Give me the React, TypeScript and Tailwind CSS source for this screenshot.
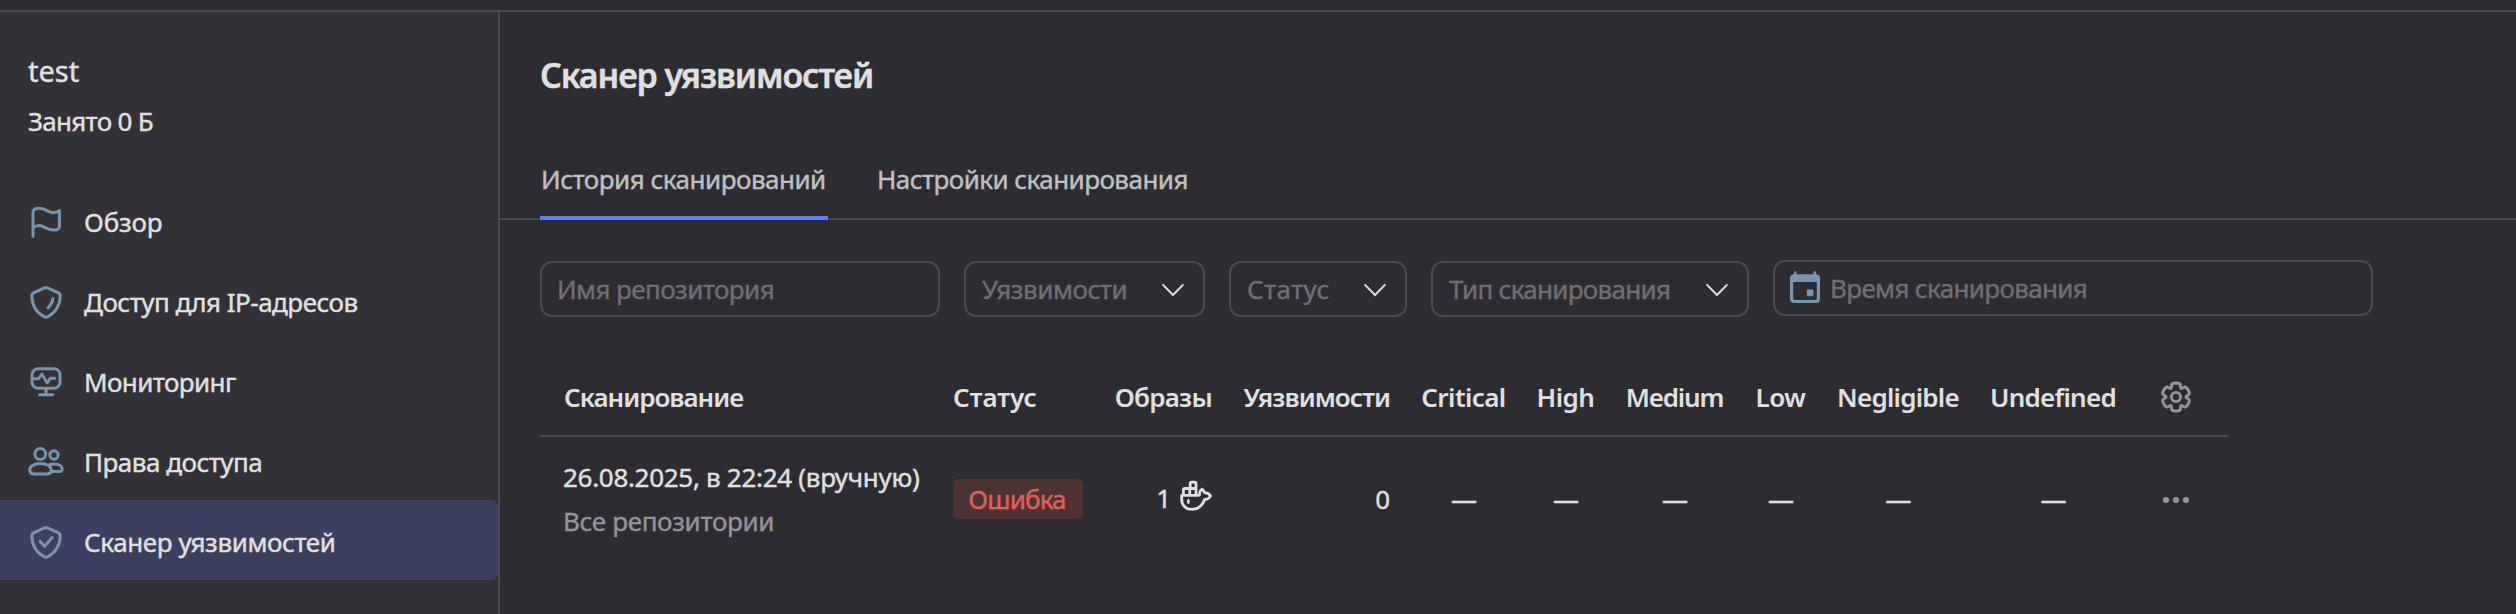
import type { ReactNode } from "react";

const Svg = ({ size = 40, children }: { size?: number; children: ReactNode }) => (
  <svg
    width={size}
    height={size}
    viewBox={`0 0 ${size} ${size}`}
    fill="none"
    stroke="currentColor"
    strokeWidth={3}
    strokeLinecap="round"
    strokeLinejoin="round"
    className="shrink-0"
  >
    {children}
  </svg>
);

const shield =
  "M18.6 7.9Q20 7.2 21.4 7.9L32 12.7Q34.3 13.8 34.2 16.2C33.9 25.5 30 32.2 21.8 36.7Q20 37.6 18.2 36.7C10 32.2 6.1 25.5 5.8 16.2Q5.7 13.8 8 12.7Z";

const FlagIcon = () => (
  <Svg>
    <path d="M7 36.4V12.4Q7 9.8 9.5 8.8C18 6.2 21.5 12.7 27.5 12.7Q30.8 12.6 33.4 10.6V26.5Q33.4 28.6 31.4 29.5C23 32.5 19 25.6 12.8 25.6Q9.6 25.7 7 27.6" />
  </Svg>
);

const ShieldIcon = () => (
  <Svg>
    <path d={shield} />
    <path d="M27 18.4Q26.1 24 22 27.8" />
  </Svg>
);

const MonitorIcon = () => (
  <Svg>
    <rect x="6" y="8.8" width="28" height="19.4" rx="6" />
    <path d="M20 28.2V34.6M13.4 34.7H26.6" />
    <path d="M7 18.8H12.4L16 14.2L21.2 23L24.3 18.2H28.6" />
  </Svg>
);

const UsersIcon = () => (
  <Svg>
    <circle cx="14.3" cy="14" r="5.4" />
    <circle cx="28" cy="15" r="4.2" />
    <path d="M3.7 30C3.9 26 8.6 23.5 14.5 23.5S25.1 26 25.3 30Q25.3 33.9 21.5 33.9H7.5Q3.7 33.9 3.7 30Z" />
    <path d="M23 24.8Q25.3 23.9 28 23.9C32.6 23.9 36.2 26 36.2 29Q36.2 31.5 33.6 31.5H25.6" />
  </Svg>
);

const ShieldCheckIcon = () => (
  <Svg>
    <path d={shield} />
    <path d="M14 21.4L18.6 26.3L26.2 17.6" />
  </Svg>
);

const ChevronIcon = () => (
  <svg width="24" height="16" viewBox="0 0 24 16" fill="none" stroke="currentColor" strokeWidth="2" className="shrink-0 text-[#e0e0e1]">
    <path d="M1.6 2.4L12 13L22.4 2.4" />
  </svg>
);

const CalendarIcon = () => (
  <svg width="30" height="32" viewBox="0 0 30 32" fill="currentColor" className="shrink-0 text-[#7a93ae]">
    <path
      fillRule="evenodd"
      d="M4 3.2V1.2Q4 .3 5.2 .3T6.5 1.2V3.2H23.5V1.2Q23.5 .3 24.8 .3T26 1.2V3.2Q30 3.4 30 7V28Q30 32 26 32H4Q0 32 0 28V7Q0 3.4 4 3.2ZM3.2 11V27.4Q3.2 29 4.8 29H25.2Q26.8 29 26.8 27.4V11Z"
    />
    <rect x="16.8" y="18.5" width="6.6" height="6.8" rx="1.2" />
  </svg>
);

const gearPoints = Array.from({ length: 6 }).flatMap((_, k) =>
  [
    [9.9, -25],
    [14.8, -19],
    [14.8, 19],
    [9.9, 25],
  ].map(([r, a]) => {
    const t = ((k * 60 + a) * Math.PI) / 180;
    return [16 + r * Math.sin(t), 16 - r * Math.cos(t)];
  }),
);
const gearPath =
  gearPoints
    .map((p, i) => {
      const n = gearPoints[(i + 1) % gearPoints.length];
      const mid = `${((p[0] + n[0]) / 2).toFixed(2)} ${((p[1] + n[1]) / 2).toFixed(2)}`;
      return i === 0 ? `M${mid}` : `Q${p[0].toFixed(2)} ${p[1].toFixed(2)} ${mid}`;
    })
    .join("") +
  `Q${gearPoints[0][0].toFixed(2)} ${gearPoints[0][1].toFixed(2)} ${((gearPoints[0][0] + gearPoints[1][0]) / 2).toFixed(2)} ${((gearPoints[0][1] + gearPoints[1][1]) / 2).toFixed(2)}Z`;

const GearIcon = () => (
  <Svg size={32}>
    <path d={gearPath} strokeWidth={2.9} />
    <circle cx="16" cy="16" r="4.6" strokeWidth={2.9} />
  </Svg>
);

const DotsIcon = () => (
  <svg width="32" height="8" viewBox="0 0 32 8" fill="currentColor">
    <circle cx="6" cy="4" r="3.1" />
    <circle cx="16" cy="4" r="3.1" />
    <circle cx="26" cy="4" r="3.1" />
  </svg>
);

const WhaleIcon = () => (
  <svg width="32" height="32" viewBox="0 0 32 32" fill="none" stroke="currentColor" strokeWidth="2.8" strokeLinejoin="round" className="shrink-0">
    <path d="M10.2 8.4V3.6Q10.2 2.2 11.6 2.2H14.6Q16 2.2 16 3.6V15M3.4 15V9.8Q3.4 8.5 4.8 8.5H16M9.8 8.5V15" />
    <path d="M1.8 15.4H18.4Q20 15.2 19.6 13.4Q19.4 10.8 22 9.2Q23.9 10.4 24.3 12.6Q28.6 12.6 30.6 16Q29 19.3 24.6 19.6C22.2 26 18 29.4 12 29.4C5.2 29.4 1.6 25 1.6 18.4Z" />
    <ellipse cx="8.4" cy="21.4" rx="1.4" ry="2.6" fill="currentColor" stroke="none" />
  </svg>
);

const nav = [
  { label: "Обзор", icon: <FlagIcon />, track: "tracking-[-0.15px]" },
  { label: "Доступ для IP-адресов", icon: <ShieldIcon />, track: "tracking-[-0.52px]" },
  { label: "Мониторинг", icon: <MonitorIcon />, track: "tracking-[-0.6px]" },
  { label: "Права доступа", icon: <UsersIcon />, track: "tracking-[-0.5px]" },
  { label: "Сканер уязвимостей", icon: <ShieldCheckIcon />, track: "tracking-[-0.4px]", active: true },
];

const Select = ({ label, className }: { label: string; className: string }) => (
  <div className={`flex h-14 items-center justify-between rounded-xl border-2 border-[#4b4a50] pr-[18px] pl-4 text-[#6f6e73] ${className}`}>
    <span>{label}</span>
    <span className="pt-0.5">
      <ChevronIcon />
    </span>
  </div>
);

const severities = [
  { label: "Critical", track: "tracking-[-0.55px]" },
  { label: "High", track: "tracking-[-0.5px]" },
  { label: "Medium", track: "tracking-[-1.2px]" },
  { label: "Low", track: "tracking-[-0.5px]" },
  { label: "Negligible", track: "tracking-[-0.75px]" },
  { label: "Undefined", track: "tracking-[-0.75px]" },
];

const columns = "grid grid-cols-[397px_162px_128px_179px_116px_88px_130px_82px_153px_157px_88px] items-center";

export default function App() {
  return (
    <div className="flex h-[614px] flex-col overflow-hidden bg-[#2d2c33] font-['Noto_Sans',sans-serif] text-[26px] leading-9 whitespace-nowrap text-[#e0e0e1] [-webkit-text-stroke:0.4px]">
      <header className="h-3 shrink-0 border-b-2 border-[#4b4a50]" />
      <div className="flex min-h-0 flex-1">
        <aside className="w-[500px] shrink-0 border-r-2 border-[#4b4a50] bg-[#323137]">
          <div className="px-7 pt-[41px] text-[29px]">test</div>
          <div className="mt-3.5 px-7 tracking-[-0.7px]">Занято 0 Б</div>
          <nav className="mt-[41px]">
            {nav.map((n) => (
              <a key={n.label} className={`flex h-20 items-center gap-[18px] pl-[26px] ${n.active ? "rounded-r-md bg-[#3c3f5e]" : ""}`}>
                <span className="text-[#7a93ae]">{n.icon}</span>
                <span className={`pt-[3px] ${n.track}`}>{n.label}</span>
              </a>
            ))}
          </nav>
        </aside>

        <main className="min-w-0 flex-1">
          <h1 className="px-10 pt-[41px] text-[34px] leading-[44px] font-semibold tracking-[-1.1px]">Сканер уязвимостей</h1>
          <div className="mt-16 flex border-b-2 border-[#4b4a50] px-10 text-[#c0c0c2]">
            <div className="-mb-0.5 w-[288px] border-b-4 border-[#5c80fb] pb-[19px] pl-px tracking-[-0.5px]">История сканирований</div>
            <div className="ml-[49px] tracking-[-0.55px]">Настройки сканирования</div>
          </div>

          <div className="flex gap-6 px-10 pt-[41px]">
            <div className="flex h-14 w-[400px] items-center rounded-xl border-2 border-[#4b4a50] pl-[15px] tracking-[-0.58px] text-[#6f6e73]">
              Имя репозитория
            </div>
            <Select label="Уязвимости" className="w-[241px] tracking-[-0.45px]" />
            <Select label="Статус" className="w-[178px] tracking-[0.4px]" />
            <Select label="Тип сканирования" className="w-[318px] tracking-[-0.7px]" />
            <div className="-mt-px flex h-14 w-[600px] items-center gap-2.5 rounded-xl border-2 border-[#4b4a50] pl-[15px] tracking-[-0.65px] text-[#6f6e73]">
              <span className="pb-0.5">
                <CalendarIcon />
              </span>
              Время сканирования
            </div>
          </div>

          <section className="mt-10 ml-10 w-[1688px]">
            <div className={`${columns} h-20 border-b-2 border-[#4b4a50] font-semibold [-webkit-text-stroke:0]`}>
              <div className="pt-0.5 pl-6 tracking-[-1px]">Сканирование</div>
              <div className="pt-0.5 pl-4">Статус</div>
              <div className="pt-0.5 pr-[15px] text-right tracking-[-0.75px]">Образы</div>
              <div className="pt-0.5 pr-4 text-right tracking-[-0.95px]">Уязвимости</div>
              {severities.map((s) => (
                <div key={s.label} className={`pt-0.5 pr-px text-center ${s.track}`}>
                  {s.label}
                </div>
              ))}
              <div className="flex justify-center pt-0.5 text-[#949398]">
                <GearIcon />
              </div>
            </div>
            <div className={`${columns} h-[122px]`}>
              <div className="flex flex-col gap-2 pt-0.5 pl-[23px]">
                <span className="tracking-[-0.3px]">26.08.2025, в 22:24 (вручную)</span>
                <span className="tracking-[-0.33px] text-[#949398]">Все репозитории</span>
              </div>
              <div className="pt-0.5 pl-4">
                <span className="flex h-10 w-[130px] items-center justify-center rounded-md bg-[#4e3335] pr-0.5 tracking-[-0.85px] text-[#e0605a]">Ошибка</span>
              </div>
              <div className="flex items-center justify-end gap-[9px] pr-[15px]">
                1
                <span className="pb-1">
                  <WhaleIcon />
                </span>
              </div>
              <div className="pt-px pr-4 text-right">0</div>
              {severities.map((s) => (
                <div key={s.label} className="pt-0.5 text-center">
                  —
                </div>
              ))}
              <div className="flex justify-center pt-[3px] text-[#949398]">
                <DotsIcon />
              </div>
            </div>
          </section>
        </main>
      </div>
    </div>
  );
}
